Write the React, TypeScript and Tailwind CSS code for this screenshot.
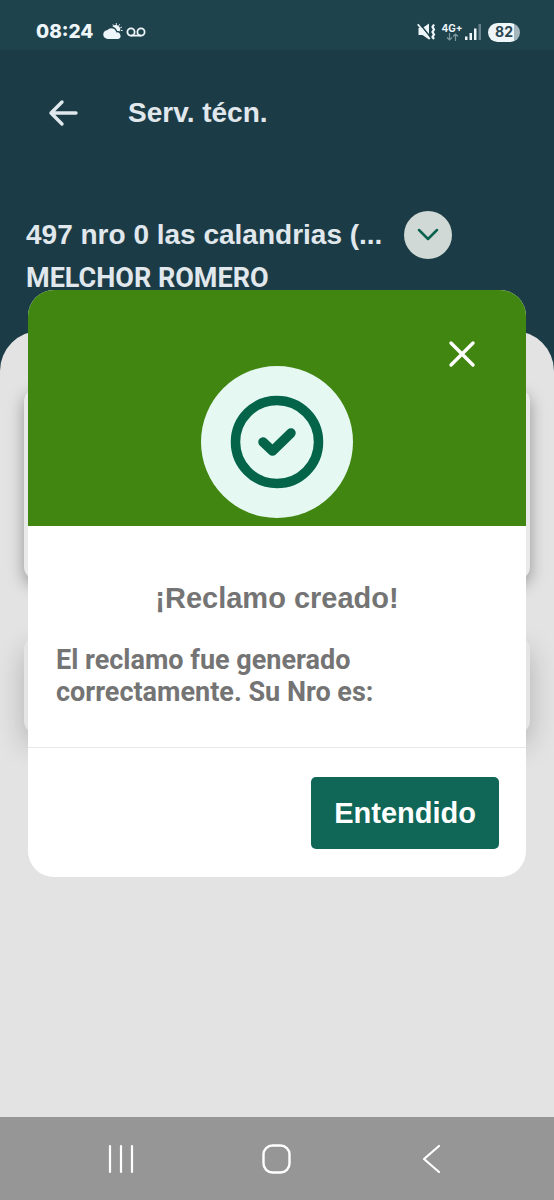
import React from 'react';

function StatusBar() {
  return (
    <div className="flex h-[50px] items-center justify-between bg-[#1f434d] pl-9 pr-[34px] pt-3.5 text-[#eef6fa]">
      <div className="flex h-9 items-center">
        <span className="w-[67px] font-[Inter,sans-serif] text-[19px] font-extrabold leading-6">08:24</span>
        <svg width="20" height="18" viewBox="0 0 20 18" fill="currentColor" aria-hidden="true">
          <path d="M5 16a4.500 4.500 0 0 1-.5-9A5 5 0 0 1 13.300 9.500a3.300 3.300 0 1 1 1.700 6.500z" />
          <path d="M9.500 3.800a4.200 4.200 0 0 1 7 4.700c-.8-.4-1.500-.5-2.300-.4a6.500 6.500 0 0 0-4.700-4.300z" />
          <path d="M10 1.800l.4.800M13.300.5v1M16.500 1.600l-.5.800M18.500 4.300l-.9.400M19.200 7.500h-1" stroke="currentColor" strokeWidth="1" strokeLinecap="round" />
        </svg>
        <svg className="ml-[3px]" width="20" height="12" viewBox="0 0 20 12" fill="none" stroke="currentColor" strokeWidth="1.800" aria-hidden="true">
          <circle cx="5" cy="6" r="3.600" />
          <circle cx="15" cy="6" r="3.600" />
          <path d="M5 9.600h10" />
        </svg>
      </div>
      <div className="flex h-9 items-center">
        <svg width="20" height="20" viewBox="0 0 20 20" fill="currentColor" aria-hidden="true">
          <path d="M1.500 6H5.500L12 1.500v16L5.500 13H1.500z" />
          <path d="M2.500 1.500l12 15" stroke="#1f434d" strokeWidth="1.600" />
          <path d="M.8 2.200l12 14.800" stroke="currentColor" strokeWidth="1.800" />
          <path d="M17 2.500l-1.500 2.500L17 7.500 15.500 10l1.500 2.500-1.500 2.500 1.500 2" fill="none" stroke="currentColor" strokeWidth="2.200" />
        </svg>
        <div className="ml-1 flex w-[22px] flex-col items-center">
          <span className="font-[Inter,sans-serif] text-[10px] font-bold leading-[10px]">4G+</span>
          <svg width="13" height="8" viewBox="0 0 13 8" fill="none" stroke="#7f989f" strokeWidth="1.200" aria-hidden="true">
            <path d="M3.500 0v7M1 4.500L3.500 7 6 4.500M9.500 8V1M7 3.500L9.500 1 12 3.500" />
          </svg>
        </div>
        <svg className="ml-0.5" width="17" height="18" viewBox="0 0 17 18" fill="currentColor" aria-hidden="true">
          <path d="M0 13.500h2.500V17H0zM4.500 10H7v7H4.500zM9 5.500h2.500V17H9z" />
          <path d="M13.500 1H16v16h-2.500z" fill="#66818a" />
        </svg>
        <span className="ml-1.5 flex h-[19px] w-8 items-center justify-center rounded-full bg-linear-to-r from-[#eef6fa] from-82% to-[#a5b6bc] to-82% font-[Inter,sans-serif] text-[14px] font-bold leading-4 text-[#294750]">
          82
        </span>
      </div>
    </div>
  );
}

function ServiceHeader() {
  return (
    <header className="px-[26px] text-[#e1e8ed]">
      <div className="flex h-[126px] items-center">
        <button type="button" aria-label="Volver" className="ml-[22px] flex w-20 items-center">
          <svg width="32" height="28" viewBox="0 0 32 28" fill="none" stroke="currentColor" strokeWidth="3.400" strokeLinecap="round" strokeLinejoin="round" aria-hidden="true">
            <path d="M14 3L3 14l11 11M3 14h25" />
          </svg>
        </button>
        <h1 className="text-[28px] font-bold leading-8">Serv. técn.</h1>
      </div>
      <div className="mt-[35px] flex items-center gap-[22px]">
        <p className="whitespace-nowrap text-[28px] font-bold leading-8">497 nro 0 las calandrias (...</p>
        <button type="button" aria-label="Ver domicilios" className="flex size-12 shrink-0 items-center justify-center rounded-full bg-[#d0d9d5] text-[#0c6350]">
          <svg width="22" height="14" viewBox="0 0 22 14" fill="none" stroke="currentColor" strokeWidth="2.500" strokeLinecap="round" strokeLinejoin="round" aria-hidden="true">
            <path d="M2 2l9 9 9-9" />
          </svg>
        </button>
      </div>
      <p className="font-[Roboto,sans-serif] text-[27px] font-bold leading-[38px]">MELCHOR ROMERO</p>
    </header>
  );
}

function ClaimDialog() {
  return (
    <div className="absolute inset-0 flex items-center px-7">
      <div role="dialog" aria-modal="true" aria-labelledby="claim-title" className="w-full overflow-hidden rounded-[26px] bg-white">
        <div className="flex h-[236px] flex-col bg-[#418611]">
          <button type="button" aria-label="Cerrar" className="mr-[50px] mt-[50px] self-end text-white">
            <svg width="28" height="28" viewBox="0 0 28 28" fill="none" stroke="currentColor" strokeWidth="3.400" strokeLinecap="round" aria-hidden="true">
              <path d="M3 3l22 22M25 3L3 25" />
            </svg>
          </button>
          <div className="-mt-0.5 flex size-[152px] shrink-0 items-center justify-center self-center rounded-full bg-[#e5f8f2] text-[#04644a]">
            <svg width="94" height="94" viewBox="0 0 94 94" fill="none" stroke="currentColor" strokeWidth="9.500" strokeLinecap="round" strokeLinejoin="round" aria-hidden="true">
              <circle cx="47" cy="47" r="41.500" />
              <path d="M33 47l9.500 9L61 38" />
            </svg>
          </div>
        </div>
        <div className="px-7 pb-[39px] pt-14 text-[#747474]">
          <h2 id="claim-title" className="text-center text-[29px] font-bold leading-8">¡Reclamo creado!</h2>
          <p className="mt-[30px] max-w-[360px] font-[Roboto,sans-serif] text-[27px] font-bold leading-8">
            El reclamo fue generado correctamente. Su Nro es:
          </p>
        </div>
        <div className="flex justify-end border-t border-[#e8e8e8] px-[27px] pb-7 pt-[29px]">
          <button type="button" className="h-[72px] rounded-[5px] bg-[#106758] px-[23px] text-[29px] font-bold leading-8 text-white">
            Entendido
          </button>
        </div>
      </div>
    </div>
  );
}

function NavigationBar() {
  return (
    <nav className="flex h-[83px] items-center justify-around bg-[#969696] px-11 text-white">
      <button type="button" aria-label="Recientes" className="flex justify-center">
        <svg width="30" height="32" viewBox="0 0 30 32" fill="none" stroke="currentColor" strokeWidth="2.200" strokeLinecap="round" aria-hidden="true">
          <path d="M3 3v26M14 3v26M25 3v26" />
        </svg>
      </button>
      <button type="button" aria-label="Inicio" className="flex justify-center">
        <svg width="30" height="32" viewBox="0 0 30 32" fill="none" stroke="currentColor" strokeWidth="2.400" aria-hidden="true">
          <rect x="1.500" y="2.500" width="26" height="27" rx="9" />
        </svg>
      </button>
      <button type="button" aria-label="Atrás" className="flex justify-center">
        <svg width="30" height="32" viewBox="0 0 30 32" fill="none" stroke="currentColor" strokeWidth="2.200" strokeLinecap="round" strokeLinejoin="round" aria-hidden="true">
          <path d="M22 3L7 16l15 13" />
        </svg>
      </button>
    </nav>
  );
}

export default function App() {
  return (
    <div className="flex min-h-screen flex-col bg-[#1b3c46] font-['Liberation_Sans',Arial,sans-serif]">
      <StatusBar />
      <main className="relative flex flex-1 flex-col">
        <ServiceHeader />
        <section className="mt-[34px] flex-1 rounded-t-[40px] bg-[#e3e3e3] px-6 pt-[58px]">
          {/* Cards stay dimmed behind the dialog */}
          <div className="h-[190px] rounded-xl bg-[#e9e9e9] shadow-[0_6px_16px_rgba(0,0,0,0.35)]" />
          <div className="mt-[58px] h-[96px] rounded-xl bg-[#e4e4e4] shadow-[0_12px_28px_rgba(0,0,0,0.22)]" />
        </section>
        <ClaimDialog />
      </main>
      <NavigationBar />
    </div>
  );
}
